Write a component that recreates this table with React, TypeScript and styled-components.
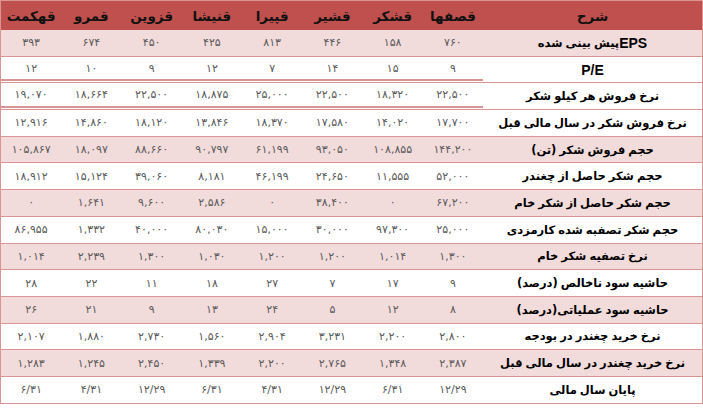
import React, { FC } from "react"
import styled, { createGlobalStyle } from "styled-components"

const GlobalStyle = createGlobalStyle`
  html, body {
    margin: 0;
    padding: 0;
    background: #ffffff;
  }
`

const companies = ["قصفها", "قشکر", "قشیر", "قپیرا", "قنیشا", "قزوین", "قمرو", "قهکمت"]

interface RowData {
  label: string
  values: string[]
  shaded?: boolean
  double?: boolean
  latin?: boolean
}

const rows: RowData[] = [
  { label: "EPSپیش بینی شده", values: ["۷۶۰", "۱۵۸", "۴۴۶", "۸۱۳", "۴۲۵", "۴۵۰", "۶۷۴", "۳۹۳"], shaded: true },
  { label: "P/E", values: ["۹", "۱۵", "۱۴", "۷", "۱۲", "۹", "۱۰", "۱۲"], double: true, latin: true },
  { label: "نرخ فروش هر کیلو شکر", values: ["۲۲,۵۰۰", "۱۸,۳۲۰", "۲۲,۵۰۰", "۲۵,۰۰۰", "۱۸,۸۷۵", "۲۲,۵۰۰", "۱۸,۶۶۴", "۱۹,۰۷۰"], double: true },
  { label: "نرخ فروش شکر در سال مالی قبل", values: ["۱۷,۷۰۰", "۱۴,۰۲۰", "۱۷,۵۸۰", "۱۸,۳۷۰", "۱۳,۸۴۶", "۱۸,۱۲۰", "۱۴,۸۶۰", "۱۲,۹۱۶"] },
  { label: "حجم فروش شکر (تن)", values: ["۱۴۴,۲۰۰", "۱۰۸,۸۵۵", "۹۳,۰۵۰", "۶۱,۱۹۹", "۹۰,۷۹۷", "۸۸,۶۶۰", "۱۸,۰۹۷", "۱۰۵,۸۶۷"], shaded: true },
  { label: "حجم شکر حاصل از چغندر", values: ["۵۲,۰۰۰", "۱۱,۵۵۵", "۲۴,۶۵۰", "۴۶,۱۹۹", "۸,۱۸۱", "۳۹,۰۶۰", "۱۵,۱۲۴", "۱۸,۹۱۲"] },
  { label: "حجم شکر حاصل از شکر خام", values: ["۶۷,۲۰۰", "۰", "۳۸,۴۰۰", "۰", "۲,۵۸۶", "۹,۶۰۰", "۱,۶۴۱", "۰"], shaded: true },
  { label: "حجم شکر تصفبه شده کارمزدی", values: ["۲۵,۰۰۰", "۹۷,۳۰۰", "۳۰,۰۰۰", "۱۵,۰۰۰", "۸۰,۰۳۰", "۴۰,۰۰۰", "۱,۳۳۲", "۸۶,۹۵۵"] },
  { label: "نرخ  تصفیه شکر خام", values: ["۱,۳۰۰", "۱,۰۱۴", "۱,۲۰۰", "۱,۲۰۰", "۱,۰۳۰", "۱,۳۰۰", "۲,۲۳۹", "۱,۰۱۴"], shaded: true },
  { label: "حاشیه سود ناخالص (درصد)", values: ["۹", "۱۷", "۷", "۲۷", "۱۸", "۱۱", "۲۲", "۲۸"] },
  { label: "حاشیه سود عملیاتی(درصد)", values: ["۸", "۱۲", "۵", "۲۴", "۱۳", "۹", "۲۱", "۲۶"], shaded: true },
  { label: "نرخ خرید چغندر در بودجه", values: ["۲,۸۰۰", "۲,۲۰۰", "۳,۲۳۱", "۲,۹۰۴", "۱,۵۶۰", "۲,۷۳۰", "۱,۸۸۰", "۲,۱۰۷"] },
  { label: "نرخ خرید چغندر در سال مالی قبل", values: ["۲,۳۸۷", "۱,۳۴۸", "۲,۷۶۵", "۲,۲۰۰", "۱,۳۳۹", "۲,۴۵۰", "۱,۲۴۵", "۱,۲۸۳"], shaded: true },
  { label: "پایان سال مالی", values: ["۱۲/۲۹", "۶/۳۱", "۱۲/۲۹", "۴/۳۱", "۶/۳۱", "۱۲/۲۹", "۴/۳۱", "۶/۳۱"] },
]

const App: FC = (): JSX.Element => {
  return (
    <>
      <GlobalStyle />
      <Table dir="rtl">
        <HeadRow>
          <HeadCell>شرح</HeadCell>
          {companies.map((c) => (
            <HeadCell key={c}>{c}</HeadCell>
          ))}
        </HeadRow>

        {rows.map((r) => (
          <Row key={r.label} $shaded={r.shaded}>
            <Label $latin={r.latin}>
              {r.label.startsWith("EPS") ? (
                <>
                  <Latin>EPS</Latin>
                  {r.label.slice(3)}
                </>
              ) : (
                r.label
              )}
            </Label>
            {r.values.map((v, i) => (
              <Value key={i} $double={r.double}>
                {v}
              </Value>
            ))}
          </Row>
        ))}
      </Table>
    </>
  )
}

const Table = styled.div`
  width: 703px;
  box-sizing: border-box;
  border: 1px solid #d99594;
  border-bottom: none;
  font-family: "DejaVu Sans", "Noto Sans", sans-serif;
  color: #000;
`

const HeadRow = styled.div`
  display: grid;
  grid-template-columns: 219px repeat(8, 1fr);
  height: 29px;
  background: #c0504d;
`

const HeadCell = styled.div`
  display: flex;
  align-items: center;
  justify-content: center;
  font-family: "DejaVu Sans", sans-serif;
  font-size: 13.5px;
  font-weight: bold;
  color: #111;
`

const Row = styled.div<{ $shaded?: boolean }>`
  display: grid;
  grid-template-columns: 219px repeat(8, 1fr);
  height: 26.7px;
  box-sizing: border-box;
  background: ${(p) => (p.$shaded ? "#f2dbdb" : "#ffffff")};
  border-bottom: 1px solid #d99594;
`

const Label = styled.div<{ $latin?: boolean }>`
  display: flex;
  align-items: center;
  justify-content: center;
  font-size: ${(p) => (p.$latin ? "14px" : "11.5px")};
  font-weight: bold;
  font-family: ${(p) =>
    p.$latin ? '"Liberation Sans", Arial, sans-serif' : '"DejaVu Sans", sans-serif'};
  letter-spacing: ${(p) => (p.$latin ? "0" : "-0.3px")};
  word-spacing: -1px;
  white-space: nowrap;
`

const Latin = styled.span`
  font-family: "Liberation Sans", Arial, sans-serif;
  font-size: 14px;
  font-weight: bold;
  letter-spacing: 0;
`

const Value = styled.div<{ $double?: boolean }>`
  display: flex;
  align-items: center;
  justify-content: center;
  font-size: 11px;
  letter-spacing: 1.2px;
  color: #5a5a5a;
  box-sizing: border-box;
  border-bottom: ${(p) => (p.$double ? "2px solid #d99594" : "none")};
  margin-bottom: ${(p) => (p.$double ? "1px" : "0")};
`

export default App
